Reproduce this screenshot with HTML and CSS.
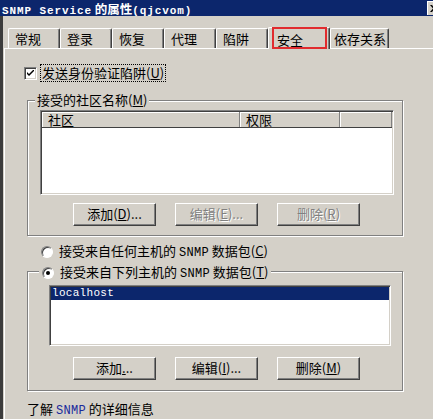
FILE: index.html
```html
<!DOCTYPE html>
<html>
<head>
<meta charset="utf-8">
<link rel="stylesheet" href="styles.css">
</head>
<body>
<div class="window">
  <div class="titlebar">
    <span class="title"><span class="tmono">SNMP Service</span> 的属性<span class="tmono">(qjcvom)</span></span>
    <span class="close"><svg width="8" height="7" viewBox="0 0 8 7"><path d="M0 0 L2 0 L4 2.5 L6 0 L8 0 L5 3.5 L8 7 L6 7 L4 4.5 L2 7 L0 7 L3 3.5 Z" fill="#000"/></svg></span>
  </div>
  <div class="frame">
    <div class="tabs">
      <div class="tab">常规</div>
      <div class="tab">登录</div>
      <div class="tab">恢复</div>
      <div class="tab">代理</div>
      <div class="tab">陷阱</div>
      <div class="tab selected">安全<span class="mark"></span></div>
      <div class="tab wide">依存关系</div>
    </div>
    <div class="panel">
      <div class="check-row">
        <span class="checkbox"><svg width="7" height="7" viewBox="0 0 7 7"><path d="M0 2 L0 4 L2 6 L7 1 L7 -1 L2 4 Z" fill="#000"/></svg></span>
        <span class="focus">发送身份验证陷阱(<u>U</u>)</span>
      </div>
      <div class="group g1">
        <span class="legend">接受的社区名称(<u>M</u>)</span>
        <div class="listview lv1">
          <div class="lv-head">
            <div class="col c1">社区</div>
            <div class="col c2">权限</div>
            <div class="col c3"></div>
          </div>
        </div>
        <div class="btn-row">
          <div class="btn">添加(<u>D</u>)...</div>
          <div class="btn disabled">编辑(<u>E</u>)...</div>
          <div class="btn disabled">删除(<u>R</u>)</div>
        </div>
      </div>
      <div class="radio-row">
        <span class="radio"></span>
        <span class="rtext">接受来自任何主机的 <span class="mono">SNMP</span> 数据包(<u>C</u>)</span>
      </div>
      <div class="group g2">
        <div class="legend rlegend">
          <span class="radio on"></span>
          <span class="rtext">接受来自下列主机的 <span class="mono">SNMP</span> 数据包(<u>T</u>)</span>
        </div>
        <div class="listview lv2">
          <div class="item sel">localhost</div>
        </div>
        <div class="btn-row b2">
          <div class="btn">添加<u>.</u>..</div>
          <div class="btn">编辑(<u>I</u>)...</div>
          <div class="btn">删除(<u>M</u>)</div>
        </div>
      </div>
      <div class="more">了解 <span class="link mono">SNMP</span> 的详细信息</div>
    </div>
  </div>
</div>
</body>
</html>
```
FILE: styles.css
```css
* { box-sizing: border-box; }
html, body { margin: 0; padding: 0; }
body {
  width: 433px;
  height: 419px;
  overflow: hidden;
  background: #d4d0c8;
  font-family: "Noto Sans CJK SC", "Noto Sans", sans-serif;
  font-size: 13px;
  color: #000;
}
.mono { font-family: "Liberation Mono", monospace; font-size: 12px; letter-spacing: 0.3px; }
u { text-decoration: underline; }

.window { display: flex; flex-direction: column; height: 100%; }

.titlebar {
  height: 18px;
  background: #0c266c;
  color: #fff;
  display: flex;
  align-items: center;
  padding-left: 2px;
  overflow: hidden;
  font-weight: bold;
  font-size: 12.5px;
  white-space: nowrap;
}
.tmono {
  font-family: "Liberation Mono", monospace;
  font-weight: bold;
  font-size: 11px;
  letter-spacing: 0.9px;
}
.close {
  margin-left: auto;
  margin-right: -10px;
  width: 16px;
  height: 14px;
  background: #d4d0c8;
  border-top: 1px solid #fff;
  border-left: 1px solid #fff;
  display: flex;
  align-items: center;
  padding-left: 2px;
}

.frame {
  flex: 1;
  border-left: 3px solid #3c3c3c;
  padding-top: 10px;
  display: flex;
  flex-direction: column;
}

.tabs {
  display: flex;
  align-items: flex-end;
  height: 22px;
  padding-left: 5px;
}
.tab {
  position: relative;
  width: 52px;
  height: 20px;
  padding: 1px 0 0 6px;
  line-height: 18px;
  border-top: 1px solid #fff;
  border-left: 1px solid #fff;
  border-right: 1px solid #404040;
  box-shadow: inset -1px 0 0 #808080;
  border-radius: 2px 2px 0 0;
  white-space: nowrap;
}
.tab.selected {
  width: 62px;
  height: 22px;
  padding: 3px 0 0 8px;
  margin-bottom: -1px;
  background: #d4d0c8;
  z-index: 1;
}
.tab.wide { width: 59px; padding-left: 3px; }
.mark {
  position: absolute;
  left: 3px;
  top: -1px;
  width: 55px;
  height: 22px;
  border: 2px solid #e12b2e;
}

.panel {
  flex: 1;
  margin-left: 1px;
  border-top: 1px solid #fff;
  border-left: 1px solid #fff;
  padding: 15px 0 0 22px;
  display: flex;
  flex-direction: column;
  align-items: flex-start;
}

.check-row {
  height: 18px;
  display: flex;
  align-items: center;
  margin-left: -3px;
}
.checkbox {
  width: 13px;
  height: 13px;
  background: #fff;
  border: 1px solid;
  border-color: #808080 #fff #fff #808080;
  box-shadow: inset 1px 1px 0 #404040, inset -1px -1px 0 #d4d0c8;
  display: flex;
  align-items: center;
  justify-content: center;
}
.focus {
  margin-left: 4px;
  outline: 1px dotted #000;
  outline-offset: 0;
  padding: 0 1px;
  line-height: 16px;
}

.group {
  position: relative;
  width: 376px;
  border: 1px solid #808080;
  box-shadow: inset 1px 1px 0 #fff, 1px 1px 0 #fff;
}
.legend {
  position: absolute;
  top: -9px;
  left: 7px;
  padding: 0 2px;
  background: #d4d0c8;
  line-height: 16px;
}
.g1 {
  margin-top: 18px;
  height: 136px;
  padding: 9px 0 0 12px;
}
.listview {
  background: #fff;
  border: 1px solid;
  border-color: #808080 #fff #fff #808080;
  box-shadow: inset 1px 1px 0 #404040, inset -1px -1px 0 #d4d0c8;
  padding: 1px;
}
.lv1 { width: 354px; height: 85px; }
.lv-head {
  display: flex;
  height: 16px;
  background: #d4d0c8;
  border-bottom: 1px solid #404040;
}
.col {
  height: 15px;
  line-height: 15px;
  padding-left: 6px;
  border-right: 1px solid #808080;
  box-shadow: inset 1px 1px 0 #fff;
}
.c1 { width: 198px; }
.c2 { width: 100px; }
.c3 { flex: 1; }

.btn-row {
  display: flex;
  gap: 19px;
  margin: 8px 0 0 33px;
}
.btn {
  width: 83px;
  height: 23px;
  line-height: 20px;
  text-align: center;
  background: #d4d0c8;
  border: 1px solid;
  border-color: #fff #404040 #404040 #fff;
  box-shadow: inset -1px -1px 0 #808080;
  white-space: nowrap;
}
.btn.disabled { color: #808080; text-shadow: 1px 1px 0 #fff; }

.radio-row {
  margin-top: 8px;
  height: 15px;
  display: flex;
  align-items: center;
  padding-left: 14px;
}
.radio {
  width: 12px;
  height: 12px;
  border-radius: 50%;
  background: #fff;
  border: 1px solid;
  border-color: #808080 #fff #fff #808080;
  box-shadow: inset 1px 1px 0 #404040;
  position: relative;
  flex: none;
}
.radio.on::after {
  content: "";
  position: absolute;
  left: 3px;
  top: 3px;
  width: 4px;
  height: 4px;
  border-radius: 50%;
  background: #000;
}
.rtext { margin-left: 6px; line-height: 15px; white-space: nowrap; }

.g2 {
  margin-top: 12px;
  height: 120px;
  padding: 13px 0 0 21px;
}
.rlegend {
  display: flex;
  align-items: center;
  left: 11px;
  top: -8px;
  padding: 0 3px;
}
.lv2 { width: 342px; height: 61px; }
.item {
  height: 13px;
  line-height: 13px;
  padding-left: 1px;
  font-family: "Liberation Mono", monospace;
  font-size: 11px;
  letter-spacing: 0.3px;
}
.item.sel { background: #0c266c; color: #fff; }
.btn-row.b2 { margin: 11px 0 0 24px; }

.more {
  margin-top: 10px;
  line-height: 15px;
}
.link { color: #1a2a9c; }
```
